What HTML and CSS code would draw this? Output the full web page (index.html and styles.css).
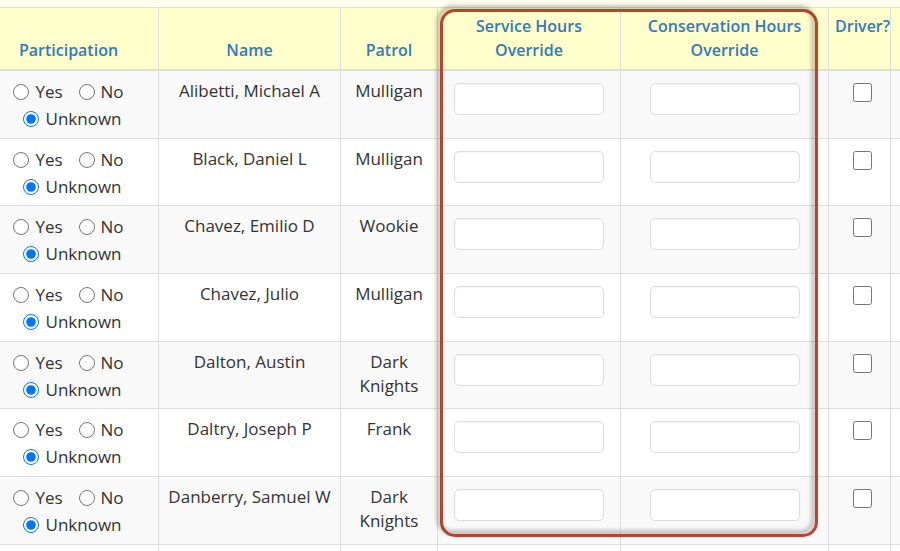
FILE: index.html
```html
<!DOCTYPE html>
<html>
<head>
<meta charset="utf-8">
<link rel="stylesheet" href="styles.css">
</head>
<body>
<div class="page">
  <div class="top-strip"></div>
  <table class="roster">
    <colgroup>
      <col class="c-part"><col class="c-name"><col class="c-patrol"><col class="c-svc"><col class="c-cons"><col class="c-drv"><col class="c-extra">
    </colgroup>
    <thead>
      <tr>
        <th>Participation</th>
        <th>Name</th>
        <th>Patrol</th>
        <th>Service Hours<br>Override</th>
        <th>Conservation Hours<br>Override</th>
        <th class="top drv">Driver?</th>
        <th></th>
      </tr>
    </thead>
    <tbody>
      <tr>
        <td><div class="rl"><label><input type="radio" name="p1">Yes</label><label><input type="radio" name="p1">No</label></div><div class="rl"><label><input type="radio" name="p1" checked>Unknown</label></div></td>
        <td>Alibetti, Michael A</td><td>Mulligan</td>
        <td><input class="hrs" type="text"></td><td><input class="hrs" type="text"></td>
        <td><input class="chk" type="checkbox"></td><td></td>
      </tr>
      <tr>
        <td><div class="rl"><label><input type="radio" name="p2">Yes</label><label><input type="radio" name="p2">No</label></div><div class="rl"><label><input type="radio" name="p2" checked>Unknown</label></div></td>
        <td>Black, Daniel L</td><td>Mulligan</td>
        <td><input class="hrs" type="text"></td><td><input class="hrs" type="text"></td>
        <td><input class="chk" type="checkbox"></td><td></td>
      </tr>
      <tr>
        <td><div class="rl"><label><input type="radio" name="p3">Yes</label><label><input type="radio" name="p3">No</label></div><div class="rl"><label><input type="radio" name="p3" checked>Unknown</label></div></td>
        <td>Chavez, Emilio D</td><td>Wookie</td>
        <td><input class="hrs" type="text"></td><td><input class="hrs" type="text"></td>
        <td><input class="chk" type="checkbox"></td><td></td>
      </tr>
      <tr>
        <td><div class="rl"><label><input type="radio" name="p4">Yes</label><label><input type="radio" name="p4">No</label></div><div class="rl"><label><input type="radio" name="p4" checked>Unknown</label></div></td>
        <td>Chavez, Julio</td><td>Mulligan</td>
        <td><input class="hrs" type="text"></td><td><input class="hrs" type="text"></td>
        <td><input class="chk" type="checkbox"></td><td></td>
      </tr>
      <tr>
        <td><div class="rl"><label><input type="radio" name="p5">Yes</label><label><input type="radio" name="p5">No</label></div><div class="rl"><label><input type="radio" name="p5" checked>Unknown</label></div></td>
        <td>Dalton, Austin</td><td>Dark<br>Knights</td>
        <td><input class="hrs" type="text"></td><td><input class="hrs" type="text"></td>
        <td><input class="chk" type="checkbox"></td><td></td>
      </tr>
      <tr>
        <td><div class="rl"><label><input type="radio" name="p6">Yes</label><label><input type="radio" name="p6">No</label></div><div class="rl"><label><input type="radio" name="p6" checked>Unknown</label></div></td>
        <td>Daltry, Joseph P</td><td>Frank</td>
        <td><input class="hrs" type="text"></td><td><input class="hrs" type="text"></td>
        <td><input class="chk" type="checkbox"></td><td></td>
      </tr>
      <tr>
        <td><div class="rl"><label><input type="radio" name="p7">Yes</label><label><input type="radio" name="p7">No</label></div><div class="rl"><label><input type="radio" name="p7" checked>Unknown</label></div></td>
        <td>Danberry, Samuel W</td><td>Dark<br>Knights</td>
        <td><input class="hrs" type="text"></td><td><input class="hrs" type="text"></td>
        <td><input class="chk" type="checkbox"></td><td></td>
      </tr>
      <tr class="partial">
        <td></td><td></td><td></td><td></td><td></td><td></td><td></td>
      </tr>
    </tbody>
  </table>
  <div class="highlight"></div>
</div>
</body>
</html>
```
FILE: styles.css
```css
html, body {
  margin: 0;
  padding: 0;
  background: #fff;
  overflow: hidden;
}
body {
  font-family: "Open Sans", "Noto Sans", sans-serif;
  font-size: 17px;
  color: #333;
  width: 900px;
  height: 551px;
}
.page {
  position: relative;
  width: 900px;
  height: 551px;
  overflow: hidden;
}
.top-strip {
  height: 7px;
  background: #fffff0;
}
.roster {
  border-collapse: collapse;
  table-layout: fixed;
  width: 1022px;
  margin-left: -22px;
  line-height: 24px;
}
.c-part { width: 180px; }
.c-name { width: 182px; }
.c-patrol { width: 97px; }
.c-svc { width: 183px; }
.c-cons { width: 208px; }
.c-drv { width: 62px; }
.c-extra { width: 110px; }

.roster th {
  background: #ffffcc;
  color: #337ab7;
  font-size: 16px;
  font-weight: 600;
  text-align: center;
  vertical-align: bottom;
  padding: 6px 2px 7px;
  border: 1px solid #ddd;
  border-bottom: 2px solid #ddd;
}
.roster th.top { vertical-align: top; }
.roster th.drv { padding-left: 6px; }
.roster td {
  text-align: center;
  vertical-align: top;
  padding: 8px 4px 0;
  border: 1px solid #ddd;
  height: 58.7px;
}
.roster tbody tr:nth-child(odd) td { background: #f9f9f9; }
.roster tbody tr:nth-child(even) td { background: #fff; }

.rl {
  line-height: 27px;
  white-space: nowrap;
}
.rl:first-child { margin-top: -1px; }
.rl + .rl { padding-left: 8px; }
.rl label { margin: 0 8px; }
.rl input {
  width: 16px;
  height: 16px;
  margin: 0 6px 0 0;
  vertical-align: -2px;
}
.hrs {
  display: block;
  margin: 4px auto 0;
  width: 150px;
  height: 32px;
  box-sizing: border-box;
  border: 1px solid #ddd;
  border-radius: 5px;
  background: #fff;
  box-shadow: inset 0 1px 1px rgba(0,0,0,0.04);
}
.chk {
  width: 19px;
  height: 19px;
  margin: 4px 0 0 6px;
}
.highlight {
  position: absolute;
  z-index: 1;
  left: 440px;
  top: 9px;
  width: 372px;
  height: 522px;
  border: 3px solid #c8432d;
  border-radius: 15px;
}
.highlight::before {
  content: "";
  position: absolute;
  z-index: -1;
  left: -6px;
  top: -6px;
  right: 0px;
  bottom: 0px;
  border: 3px solid rgba(70,70,70,0.5);
  border-radius: 15px;
  filter: blur(2px);
}
```
